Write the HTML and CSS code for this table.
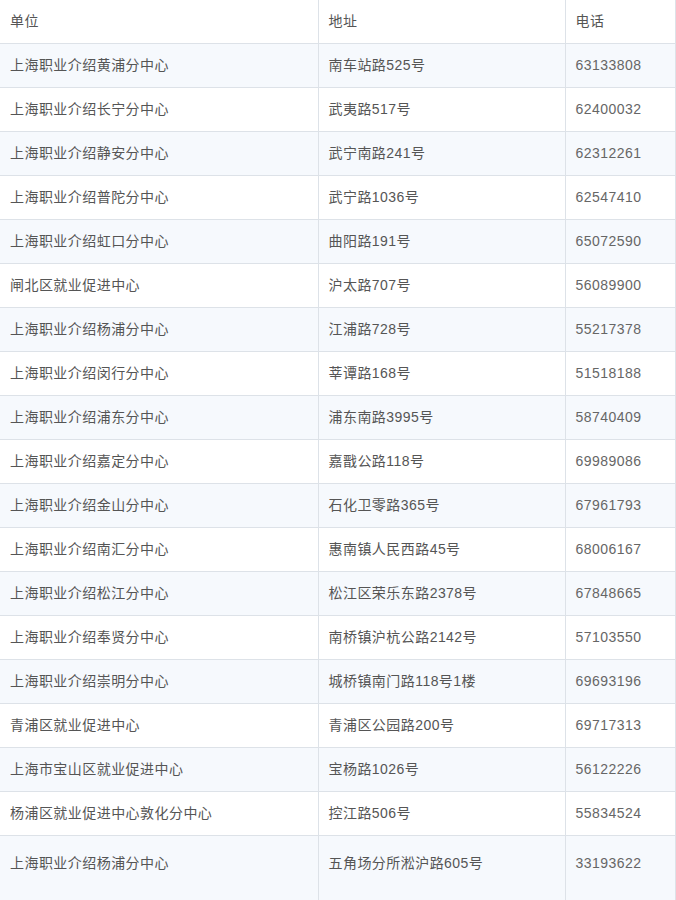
FILE: index.html
```html
<!DOCTYPE html>
<html lang="zh">
<head>
<meta charset="utf-8">
<link rel="stylesheet" href="styles.css">
</head>
<body>
<table class="list">
<colgroup><col class="c1"><col class="c2"><col class="c3"></colgroup>
<thead>
<tr><th>单位</th><th>地址</th><th>电话</th></tr>
</thead>
<tbody>
<tr><td>上海职业介绍黄浦分中心</td><td>南车站路525号</td><td class="num">63133808</td></tr>
<tr><td>上海职业介绍长宁分中心</td><td>武夷路517号</td><td class="num">62400032</td></tr>
<tr><td>上海职业介绍静安分中心</td><td>武宁南路241号</td><td class="num">62312261</td></tr>
<tr><td>上海职业介绍普陀分中心</td><td>武宁路1036号</td><td class="num">62547410</td></tr>
<tr><td>上海职业介绍虹口分中心</td><td>曲阳路191号</td><td class="num">65072590</td></tr>
<tr><td>闸北区就业促进中心</td><td>沪太路707号</td><td class="num">56089900</td></tr>
<tr><td>上海职业介绍杨浦分中心</td><td>江浦路728号</td><td class="num">55217378</td></tr>
<tr><td>上海职业介绍闵行分中心</td><td>莘谭路168号</td><td class="num">51518188</td></tr>
<tr><td>上海职业介绍浦东分中心</td><td>浦东南路3995号</td><td class="num">58740409</td></tr>
<tr><td>上海职业介绍嘉定分中心</td><td>嘉戬公路118号</td><td class="num">69989086</td></tr>
<tr><td>上海职业介绍金山分中心</td><td>石化卫零路365号</td><td class="num">67961793</td></tr>
<tr><td>上海职业介绍南汇分中心</td><td>惠南镇人民西路45号</td><td class="num">68006167</td></tr>
<tr><td>上海职业介绍松江分中心</td><td>松江区荣乐东路2378号</td><td class="num">67848665</td></tr>
<tr><td>上海职业介绍奉贤分中心</td><td>南桥镇沪杭公路2142号</td><td class="num">57103550</td></tr>
<tr><td>上海职业介绍崇明分中心</td><td>城桥镇南门路118号1楼</td><td class="num">69693196</td></tr>
<tr><td>青浦区就业促进中心</td><td>青浦区公园路200号</td><td class="num">69717313</td></tr>
<tr><td>上海市宝山区就业促进中心</td><td>宝杨路1026号</td><td class="num">56122226</td></tr>
<tr><td>杨浦区就业促进中心敦化分中心</td><td>控江路506号</td><td class="num">55834524</td></tr>
<tr class="last"><td>上海职业介绍杨浦分中心</td><td>五角场分所淞沪路605号</td><td class="num">33193622</td></tr>
</tbody>
</table>
</body>
</html>
```
FILE: styles.css
```css
html, body {
  margin: 0;
  padding: 0;
  background: #ffffff;
}
.list {
  border-collapse: collapse;
  table-layout: fixed;
  width: 675px;
  font-family: "Liberation Sans", "Noto Sans CJK SC", sans-serif;
  font-size: 14px;
  letter-spacing: 0.45px;
  color: #555555;
}
.c1 { width: 318px; }
.c2 { width: 247px; }
.c3 { width: 110px; }
.list th, .list td {
  height: 44px;
  padding: 0 0 0 10px;
  text-align: left;
  font-weight: normal;
  vertical-align: middle;
  border-bottom: 1px solid #dde2e8;
  border-right: 1px solid #dde2e8;
  box-sizing: border-box;
  line-height: 20px;
}
.list th {
  height: 43px;
  color: #555555;
}
.list tbody tr:nth-child(odd) td {
  background: #f6f9fd;
}
.list td.num {
  color: #666666;
}
.list tr.last td {
  height: 80px;
  vertical-align: top;
  padding-top: 17px;
  border-bottom: none;
}
```
